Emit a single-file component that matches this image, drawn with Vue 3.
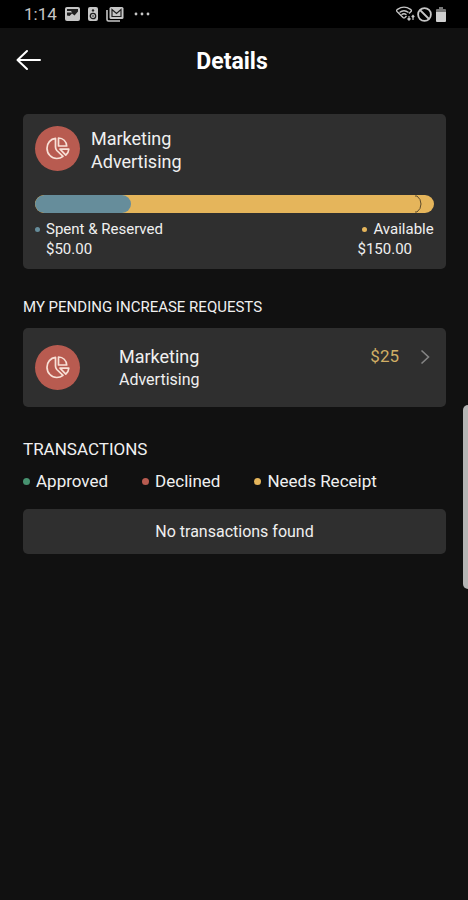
<script setup>
const budget = { name: 'Marketing', category: 'Advertising', spent: 50, available: 150 }
const spentShare = '24%'
const requests = [{ id: 1, name: 'Marketing', category: 'Advertising', amount: 25 }]
const statuses = [
  { label: 'Approved', tone: 'green' },
  { label: 'Declined', tone: 'red' },
  { label: 'Needs Receipt', tone: 'amber' },
]
const money = (n) => '$' + n.toFixed(2)
</script>

<template>
  <div class="screen">
    <svg class="defs" aria-hidden="true">
      <symbol id="pie" viewBox="0 0 24 24">
        <g fill="none" stroke="#f8e0d6" stroke-width="1.7" stroke-linejoin="round">
          <path d="M9.500 1.400C4.500 2 1 6 1 11.200C1 17 5.500 21.500 10.800 21.500C13.300 21.500 15.400 20.700 17 19.400L10.800 13.500Q9.500 12 9.500 10Z" />
          <path d="M12.500 1C17 1.200 20.300 4.500 20.700 9H12.500Z" />
          <path d="M14 12.200H22.800C22.600 14.600 21.500 16.800 19.800 18.200Z" />
        </g>
      </symbol>
    </svg>

    <div class="status">
      <div class="side">
        <span class="clock">1:14</span>
        <svg width="15" height="14" viewBox="0 0 15 14">
          <rect width="15" height="14" rx="2" fill="#c6c6c6" />
          <path d="M2 2H13V4.500L9.500 8.500L7 6.500L4.500 9L2 8.500Z" fill="#202020" />
          <path d="M2 4H6L7 5.500H2Z" fill="#c6c6c6" />
        </svg>
        <svg width="10" height="14" viewBox="0 0 10 14">
          <rect width="10" height="14" rx="2" fill="#c6c6c6" />
          <circle cx="5" cy="3.4" r="1.2" fill="#202020" />
          <circle cx="5" cy="9" r="2.7" fill="none" stroke="#202020" stroke-width="1.3" />
          <circle cx="5" cy="9" r="0.8" fill="#202020" />
        </svg>
        <svg width="18" height="15" viewBox="0 0 18 15">
          <path d="M1 3V12.5Q1 14 2.5 14H14" fill="none" stroke="#c6c6c6" stroke-width="1.6" />
          <rect x="3.5" width="14" height="12" rx="1.5" fill="#c6c6c6" />
          <path d="M6 9.5V2.500L10.5 6.500L15 2.500V9.500Z" fill="none" stroke="#202020" stroke-width="1.2" />
        </svg>
        <svg class="more" width="16" height="4" viewBox="0 0 16 4" fill="#c6c6c6">
          <circle cx="2" cy="2" r="1.4" /><circle cx="8" cy="2" r="1.4" /><circle cx="14" cy="2" r="1.4" />
        </svg>
      </div>
      <div class="side right">
        <svg width="19" height="16" viewBox="0 0 19 16" fill="none" stroke="#c6c6c6" stroke-width="1.4">
          <path d="M1 5.500Q0 4.500 1.500 3.300Q8 -1 14.500 3.300Q16 4.500 15 5.500L13 7.500" />
          <path d="M1 5.500L7 11.500Q8 12.300 9 11.500L10.500 10" />
          <path d="M3.500 6.500Q8 3 12.500 6.500M5.500 8.800Q8 6.800 10.500 8.800" />
          <path d="M13 10V14M11.500 12.500L13 14.200L14.500 12.500M17 14V9.500M15.700 11L17 9.500L18.300 11" stroke-width="1.2" />
        </svg>
        <svg width="15" height="15" viewBox="0 0 15 15" fill="none" stroke="#c6c6c6" stroke-width="1.8">
          <circle cx="7.500" cy="7.500" r="6.400" /><path d="M3 3L12 12" />
        </svg>
        <svg class="battery" width="10" height="15" viewBox="0 0 10 15">
          <path d="M3 0H7V2H9Q10 2 10 3V6H0V3Q0 2 1 2H3Z" fill="#777" />
          <path d="M0 5H10V14Q10 15 9 15H1Q0 15 0 14Z" fill="#cfcfcf" />
        </svg>
      </div>
    </div>

    <header class="header">
      <button class="back" type="button" aria-label="Back">
        <svg width="26" height="22" viewBox="0 0 26 22" fill="none" stroke="#fff" stroke-width="2" stroke-linecap="round" stroke-linejoin="round">
          <path d="M24 11H2M11 2L1.500 11L11 20" />
        </svg>
      </button>
      <h1>Details</h1>
    </header>

    <main>
      <section class="card summary">
        <div class="identity">
          <span class="badge"><svg width="24" height="24"><use href="#pie" /></svg></span>
          <div class="names"><div>{{ budget.name }}</div><div>{{ budget.category }}</div></div>
        </div>
        <div class="bar">
          <div class="spent" :style="{ width: spentShare }"></div>
          <svg class="cap" width="8" height="18" viewBox="0 0 8 18" fill="none" stroke="#5c4a2b" stroke-width="1">
            <path d="M0 1H2Q6 4 6 9T2 17H0" />
          </svg>
        </div>
        <dl class="totals">
          <div>
            <dt><i class="dot blue"></i>Spent &amp; Reserved</dt>
            <dd>{{ money(budget.spent) }}</dd>
          </div>
          <div class="available">
            <dt><i class="dot amber"></i>Available</dt>
            <dd>{{ money(budget.available) }}</dd>
          </div>
        </dl>
      </section>

      <h2 class="pending">MY PENDING INCREASE REQUESTS</h2>
      <button v-for="r in requests" :key="r.id" class="card request" type="button">
        <span class="badge"><svg width="24" height="24"><use href="#pie" /></svg></span>
        <span class="who"><span class="name">{{ r.name }}</span><span class="category">{{ r.category }}</span></span>
        <span class="amount">${{ r.amount }}
          <svg width="10" height="16" viewBox="0 0 10 16" fill="none" stroke="#858585" stroke-width="1.600"><path d="M1.500 1.500L8.500 8L1.500 14.500" /></svg>
        </span>
      </button>

      <h2 class="transactions">TRANSACTIONS</h2>
      <ul class="legend">
        <li v-for="s in statuses" :key="s.label"><i class="dot" :class="s.tone"></i>{{ s.label }}</li>
      </ul>
      <p class="card empty">No transactions found</p>
    </main>
    <div class="edge"></div>
  </div>
</template>

<style>
body { margin: 0; background: #111; }
</style>

<style scoped>
.screen { position: relative; box-sizing: border-box; min-height: 100vh; background: #111; color: #f0f0f0; font-family: Roboto, sans-serif; overflow: hidden; }
.defs { position: absolute; width: 0; height: 0; }
svg { display: block; flex: none; }
.status { display: flex; justify-content: space-between; height: 28px; padding: 0 22px 0 24px; background: #000; }
.side { display: flex; align-items: center; gap: 8px; color: #c6c6c6; }
.side.right { gap: 2px; }
.clock { font-size: 17px; line-height: 28px; }
.more { margin-left: 2px; }
.battery { margin-left: 2px; }
.header { display: grid; grid-template-columns: 48px 1fr 48px; align-items: center; height: 64px; padding: 0 20px 0 16px; }
.back { padding: 0; border: 0; background: none; cursor: pointer; }
h1 { margin: 0; padding-top: 4px; text-align: center; font-size: 23px; line-height: 28px; font-weight: 700; color: #fff; }
main { padding: 22px 22px 22px 23px; }
.card { box-sizing: border-box; width: 100%; margin: 0; border: 0; border-radius: 5px; background: #2f2f2f; color: inherit; font-family: inherit; }
.summary { padding: 12px 12px 10px; }
.identity { display: flex; gap: 11px; }
.badge { display: flex; flex: none; align-items: center; justify-content: center; width: 45px; height: 45px; border-radius: 50%; background: #b85b50; }
.names { padding-top: 1px; font-size: 18px; line-height: 23px; }
.bar { display: flex; justify-content: space-between; height: 18px; margin-top: 22px; border-radius: 9px; background: #e5b55b; overflow: hidden; }
.spent { border-radius: 9px; background: #668d9b; }
.cap { margin-right: 11px; }
.totals { display: flex; justify-content: space-between; margin: 6px 0 0; font-size: 15px; line-height: 20px; }
.totals dt { display: flex; align-items: center; gap: 6px; }
.totals dd { margin: 0 0 0 11px; }
.totals .available dd { margin: 0 22px 0 -5px; }
.dot { flex: none; width: 7px; height: 7px; border-radius: 50%; }
.totals .dot { width: 5px; height: 5px; }
.blue { background: #668d9b; }
.amber { background: #e5b55b; }
.green { background: #479270; }
.red { background: #b85b50; }
h2 { margin: 0; font-weight: 400; }
.pending { margin: 28px 0 11px; font-size: 15px; line-height: 20px; }
.request { display: flex; align-items: center; height: 79px; padding: 0 16px 0 12px; text-align: left; cursor: pointer; }
.who { flex: 1; margin-left: 39px; }
.name, .category { display: block; line-height: 23px; }
.name { font-size: 18px; }
.category { font-size: 16px; }
.amount { display: flex; align-items: center; align-self: flex-start; gap: 21px; margin-top: 17px; font-size: 17px; line-height: 23px; color: #d1ae65; }
.transactions { margin-top: 30px; font-size: 17px; line-height: 24px; }
.legend { display: flex; gap: 34px; margin: 8px 0 16px; padding: 0; list-style: none; font-size: 17px; line-height: 24px; }
.legend li { display: flex; align-items: center; gap: 6px; }
.empty { padding: 11px; text-align: center; font-size: 16px; line-height: 23px; }
.edge { position: absolute; right: 0; top: 405px; width: 5px; height: 184px; border-radius: 5px 0 0 5px; background: #b5b5b5; }
</style>
